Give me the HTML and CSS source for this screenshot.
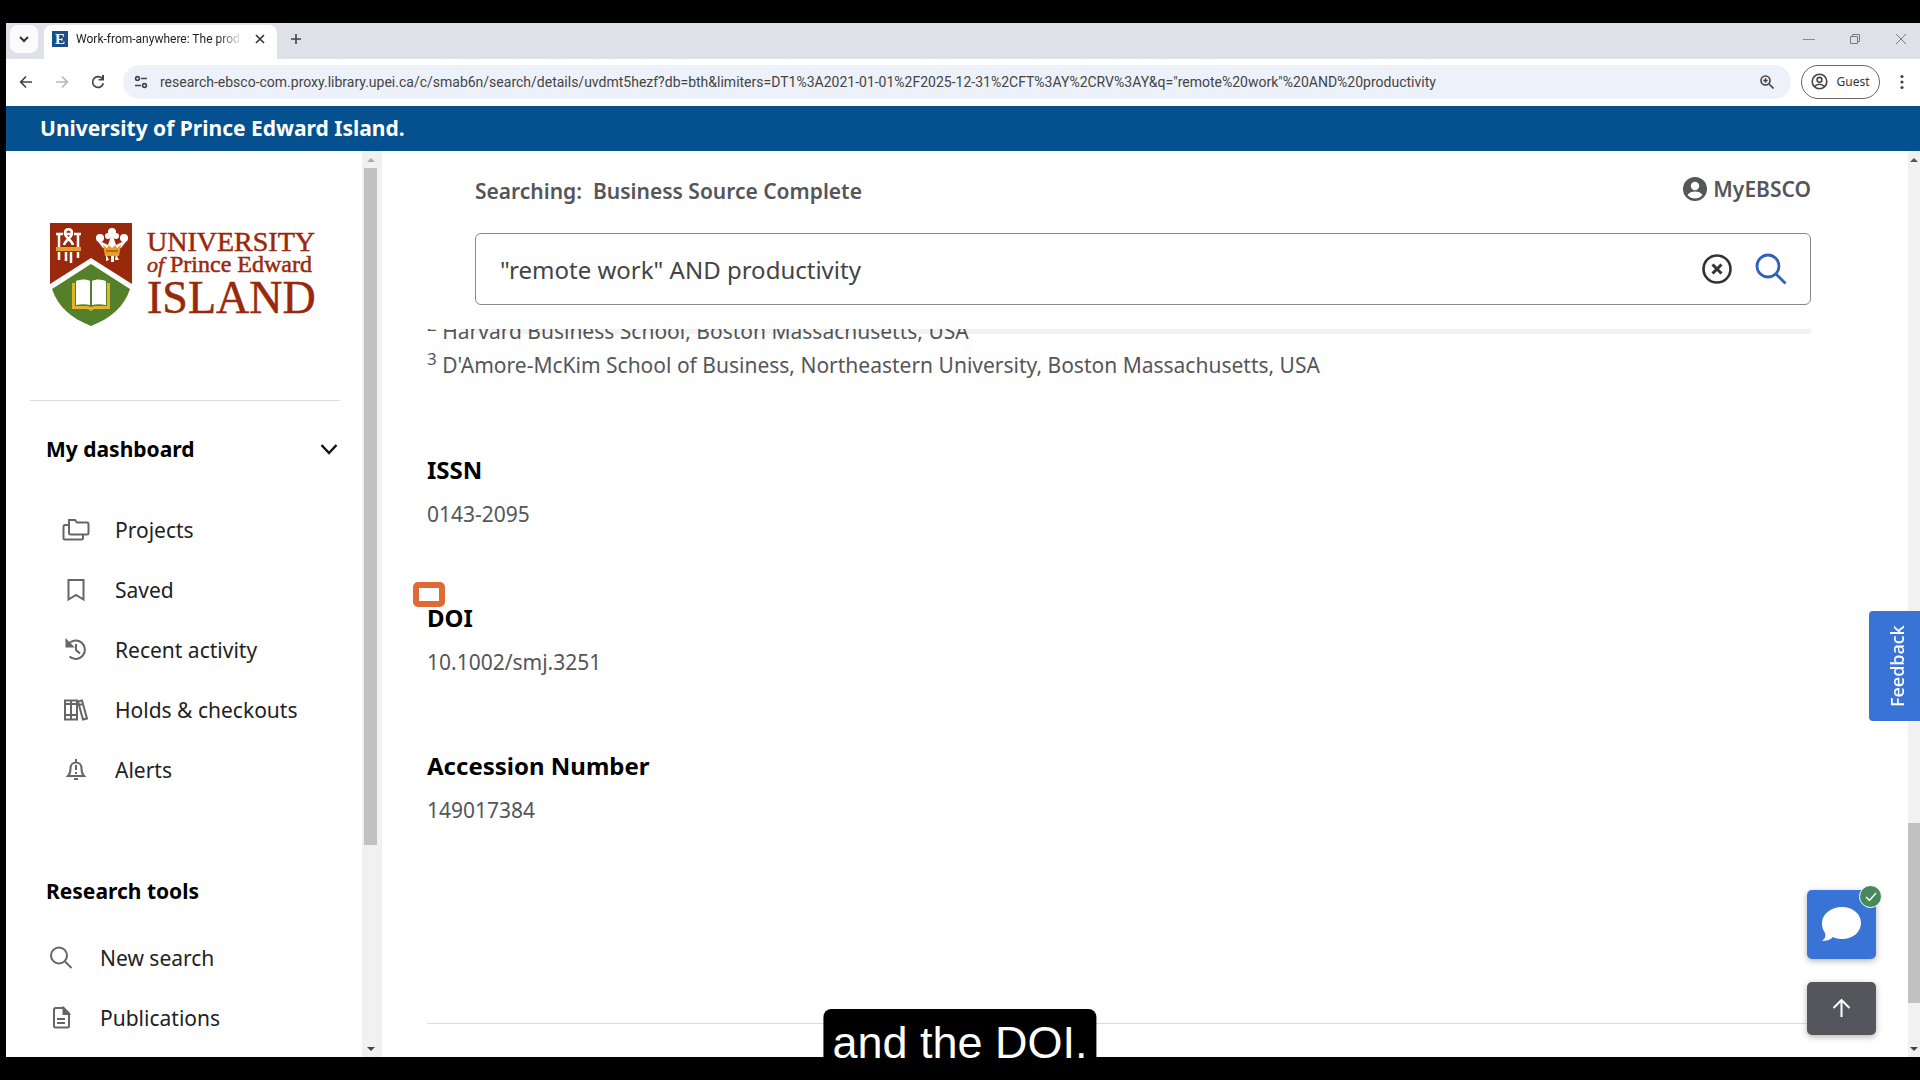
FILE: index.html
```html
<!DOCTYPE html>
<html lang="en">
<head>
  <meta charset="UTF-8">
  <meta name="viewport" content="width=device-width, initial-scale=1.0">
  <title>Work-from-anywhere: The productivity effects</title>
  <link rel="stylesheet" href="styles.css">
</head>
<body>

<div class="window">
  <div class="tab-strip">
    <button class="tab-search" aria-label="Search tabs"><svg width="12" height="12" viewBox="0 0 12 12"><path d="M2 4l4 4 4-4" fill="none" stroke="#333" stroke-width="2"/></svg></button>
    <div class="tab">
      <span class="favicon">E</span>
      <span class="tab-title">Work-from-anywhere: The prod</span>
      <button aria-label="Close tab"><svg width="10" height="10" viewBox="0 0 10 10"><path d="M1 1l8 8M9 1l-8 8" stroke="#333" stroke-width="1.6"/></svg></button>
    </div>
    <button class="new-tab" aria-label="New tab"><svg width="12" height="12" viewBox="0 0 12 12"><path d="M6 1v10M1 6h10" stroke="#444" stroke-width="1.6"/></svg></button>
    <div class="window-buttons">
      <button aria-label="Minimize"><svg width="12" height="12" viewBox="0 0 12 12"><path d="M0 6.5h12" stroke="#888b92"/></svg></button>
      <button aria-label="Restore"><svg width="12" height="12" viewBox="0 0 12 12"><path d="M1.5 3.500h7v7h-7zM3.500 3.500v-2h7v7h-2" fill="none" stroke="#777a82"/></svg></button>
      <button aria-label="Close"><svg width="12" height="12" viewBox="0 0 12 12"><path d="M1 1l10 10M11 1L1 11" stroke="#777a82"/></svg></button>
    </div>
  </div>

  <div class="toolbar">
    <button aria-label="Back"><svg width="14" height="14" viewBox="0 0 14 14"><path d="M13 7H2M7 1.500L1.700 7 7 12.500" fill="none" stroke="#444" stroke-width="1.700"/></svg></button>
    <button aria-label="Forward"><svg width="14" height="14" viewBox="0 0 14 14"><path d="M1 7h11M7 1.500L12.300 7 7 12.500" fill="none" stroke="#b5b5b5" stroke-width="1.700"/></svg></button>
    <button aria-label="Reload"><svg width="14" height="14" viewBox="0 0 14 14"><path d="M11.500 4A5.400 5.400 0 1 0 12.300 8.200" fill="none" stroke="#444" stroke-width="1.700"/><path d="M13 0v5.500H7.500V4H11V0z" fill="#444"/></svg></button>
    <div class="address">
      <span class="site-info"><svg width="14" height="14" viewBox="0 0 14 14"><g fill="none" stroke="#444" stroke-width="1.600"><circle cx="3.500" cy="3.500" r="1.900"/><path d="M7 3.500h6M1 10.500h6"/><circle cx="10.500" cy="10.500" r="1.900"/></g></svg></span>
      <input type="text" aria-label="Address" value="research-ebsco-com.proxy.library.upei.ca/c/smab6n/search/details/uvdmt5hezf?db=bth&amp;limiters=DT1%3A2021-01-01%2F2025-12-31%2CFT%3AY%2CRV%3AY&amp;q=&quot;remote%20work&quot;%20AND%20productivity">
      <button aria-label="Zoom"><svg width="14" height="14" viewBox="0 0 14 14"><g fill="none" stroke="#444" stroke-width="1.600"><circle cx="5.500" cy="5.500" r="4.500"/><path d="M9 9l4.500 4.500M5.500 3.300v4.400M3.300 5.500h4.400"/></g></svg></button>
    </div>
    <button class="guest"><svg width="17" height="17" viewBox="0 0 17 17"><g fill="none" stroke="#444" stroke-width="1.600"><circle cx="8.500" cy="8.500" r="7.300"/><circle cx="8.500" cy="6.800" r="2.400"/><path d="M3.500 13.500c2.600-3 7.400-3 10 0"/></g></svg>Guest</button>
    <button aria-label="Menu"><svg width="4" height="16" viewBox="0 0 4 16"><g fill="#444"><circle cx="2" cy="2.500" r="1.600"/><circle cx="2" cy="8" r="1.600"/><circle cx="2" cy="13.500" r="1.600"/></g></svg></button>
  </div>

  <div class="banner">University of Prince Edward Island.</div>

  <div class="page">
    <nav class="sidebar">
      <a class="logo" href="#" aria-label="University of Prince Edward Island">
        <svg width="268" height="106" viewBox="0 0 268 106">
          <path d="M0 0h82v62C76 84 61 96 41 104 21 96 6 84 0 62z" fill="#fff"/>
          <path d="M0 0h82v61L41 35 0 61z" fill="#99290c"/>
          <path d="M41 41l39 25C74 84 61 95 41 103 21 95 8 84 2 66z" fill="#55802a"/>
          <path d="M22 60h3v23h13l3 1 3-1h13V60h3v26H44l-3 2-3-2H22z" fill="#e3b32c"/>
          <path d="M26 58c5-2 11-2 14 0v24c-4-1-9-1-14 0zM42 58c4-2 9-2 14 0v24c-5-1-10-1-14 0z" fill="#fff"/>
          <g fill="none" stroke="#fff" stroke-width="2.500"><path d="M6 11h7M14 11h9M24 11h7M9 10v14M28 10v14M9 29v8M28 29v6M16 29v9M21 29v11M14 22c1-5 8-7 8-12 0-5-7-5-7 0 0 5 7 7 8 12"/></g>
          <path d="M6 24h25v4H6z" fill="#e5a02a"/>
          <g fill="#fff"><circle cx="62" cy="9" r="4"/><circle cx="58" cy="13" r="3"/><circle cx="66" cy="13" r="3"/><circle cx="50" cy="15" r="4"/><circle cx="74" cy="15" r="4"/><path d="M46 16l12 6 4-12 4 12 12-6-7 9H53zM56 31l3 6-3 1zM61 31h3v8h-3zM66 31l3 6h-4z"/></g>
          <path d="M53 22l4 3 2-3 3 3 3-3 2 3 4-3-2 11H55z" fill="#e5a02a"/><path d="M56 28h12" stroke="#99290c"/>
          <g class="logo-text"><text x="97" y="28" font-size="28">UNIVERSITY</text><text x="97" y="49" font-size="22" font-style="italic">of</text><text x="120" y="49" font-size="24">Prince Edward</text><text x="97" y="90" font-size="46">ISLAND</text></g>
        </svg>
      </a>
      <div class="nav-section">
        <h2>My dashboard <button aria-label="Collapse"><svg width="18" height="18" viewBox="0 0 18 18"><path d="M1.500 5L9 13l7.500-8" fill="none" stroke="#111" stroke-width="2.400"/></svg></button></h2>
        <ul class="nav-list nested">
          <li><a href="#"><svg width="28" height="24" viewBox="0 0 28 24"><path d="M7 2h6l2 2.500h10q1.500 0 1.500 1.500v9q0 1.500-1.500 1.500H9Q7 16.500 7 15zM7 7H3Q1.500 7 1.500 8.500V20q0 1.500 1.500 1.500h16.500q1.500 0 1.500-1.500v-3.500"/></svg>Projects</a></li>
          <li><a href="#"><svg width="28" height="24" viewBox="0 0 28 24"><path d="M6.500 2h15v19.500L14 17l-7.500 4.500z"/></svg>Saved</a></li>
          <li><a href="#"><svg width="28" height="24" viewBox="0 0 28 24"><path d="M6.500 6A9.200 9.200 0 1 1 7.500 18.500M14 6v6l4 3.500"/><path d="M4.500 2.500v6h6z" fill="#666"/></svg>Recent activity</a></li>
          <li><a href="#"><svg width="28" height="24" viewBox="0 0 28 24"><path d="M3 2.500h12v19H3zM9 2.500v19M3 6h12M3 17h12M16 3.500l4-1 5 18-4 1zM17 7l4-1"/></svg>Holds &amp; checkouts</a></li>
          <li><a href="#"><svg width="28" height="24" viewBox="0 0 28 24"><path d="M14 1v3M6 18c2-2 2.500-4 2.500-7.500 0-8 11-8 11 0 0 3.500.5 5.500 2.500 7.500zM12 21h4M14 7v5M14 14v2" /></svg>Alerts</a></li>
        </ul>
      </div>
      <div class="nav-section">
        <h2>Research tools</h2>
        <ul class="nav-list">
          <li><a href="#"><svg width="28" height="24" viewBox="0 0 28 24"><circle cx="12" cy="9.500" r="8"/><path d="M18 15.500l6.500 6.500"/></svg>New search</a></li>
          <li><a href="#"><svg width="28" height="24" viewBox="0 0 28 24"><path d="M8.500 2h8l5.500 5.500V20q0 1.500-1.500 1.500h-12Q7 21.500 7 20V3.500Q7 2 8.500 2zM10 13h8M10 17h8"/><path d="M16.500 2v6H22z" fill="#666"/></svg>Publications</a></li>
        </ul>
      </div>
    </nav>
    <div class="scrollbar side-scroll"><span class="arrow up"></span><span class="thumb"></span><span class="rest"></span><span class="arrow down"></span></div>

    <main class="content">
      <header class="search-header">
        <div class="search-top">
          <span>Searching: &nbsp;Business Source Complete</span>
          <a class="account" href="#"><svg width="24" height="24" viewBox="0 0 24 24"><circle cx="12" cy="12" r="12" fill="#55565a"/><circle cx="12" cy="9" r="4.200" fill="#fff"/><path d="M4.500 18c3-4.600 12-4.600 15 0-4 4.700-11 4.700-15 0z" fill="#fff"/></svg>MyEBSCO</a>
        </div>
        <form class="search-box">
          <input type="text" aria-label="Search" value="&quot;remote work&quot; AND productivity">
          <button type="button" aria-label="Clear"><svg width="30" height="30" viewBox="0 0 30 30"><g fill="none" stroke="#333"><circle cx="15" cy="15" r="13.500" stroke-width="2.600"/><path d="M10.500 10.500l9 9M19.500 10.500l-9 9" stroke-width="3"/></g></svg></button>
          <button type="button" aria-label="Search"><svg width="32" height="32" viewBox="0 0 32 32"><g fill="none" stroke="#3262b5" stroke-width="2.800"><circle cx="13" cy="13" r="11"/><path d="M21 21l9.500 9.500"/></g></svg></button>
        </form>
      </header>
      <article class="record">
        <ul class="affiliations">
          <li><sup>2</sup> Harvard Business School, Boston Massachusetts, USA</li>
          <li><sup>3</sup> D'Amore-McKim School of Business, Northeastern University, Boston Massachusetts, USA</li>
        </ul>
        <section><h3>ISSN</h3><p>0143-2095</p></section>
        <section class="marked"><h3>DOI</h3><p>10.1002/smj.3251</p></section>
        <section><h3>Accession Number</h3><p>149017384</p></section>
      </article>
    </main>
    <div class="scrollbar main-scroll"><span class="arrow up"></span><span class="space"></span><span class="thumb"></span><span class="rest"></span><span class="arrow down"></span></div>

    <button class="feedback">Feedback</button>
    <div class="floating">
      <button class="chat" aria-label="Chat">
        <svg width="42" height="38" viewBox="0 0 42 38"><path d="M21 1c11 0 19 7 19 16s-8 16-19 16c-4 0-7-1-9-2-3 3-7 4-11 4 3-2 4-5 3-8-2-3-3-6-3-10C1 8 10 1 21 1z" fill="#fff"/></svg>
        <span class="badge"><svg width="12" height="10" viewBox="0 0 12 10"><path d="M1 5l3.500 3.500L11 1" fill="none" stroke="#fff" stroke-width="1.500"/></svg></span>
      </button>
      <button class="to-top" aria-label="Back to top"><svg width="20" height="20" viewBox="0 0 20 20"><path d="M9.500 18V1M1.500 9l8-8 8 8" fill="none" stroke="#fff" stroke-width="2"/></svg></button>
    </div>
  </div>
</div>

<div class="caption">and the DOI.</div>

</body>
</html>
```
FILE: styles.css
```css
*, *::before, *::after { box-sizing: border-box; }
body { margin: 0; height: 100vh; padding: 23px 0 23px 6px; background: #000; font-family: "Noto Sans", sans-serif; overflow: hidden; }
button { border: none; background: none; padding: 0; font-family: inherit; cursor: pointer; display: flex; align-items: center; justify-content: center; }
input { border: none; background: none; outline: none; font-family: inherit; min-width: 0; flex: 1; padding: 0; }
a { color: inherit; text-decoration: none; }
h2, h3, p, ul { margin: 0; padding: 0; }
ul { list-style: none; }
svg { display: block; flex-shrink: 0; }

.window { height: 100%; display: flex; flex-direction: column; background: #fff; }

/* browser chrome */
.tab-strip { display: flex; align-items: center; height: 36px; background: #dfe1e8; padding: 2px 13px 6px 4px; flex-shrink: 0; }
.tab-search { width: 28px; height: 28px; background: #fbfbfd; border-radius: 8px; }
.tab { display: flex; align-items: center; align-self: stretch; width: 233px; margin: 0 0 -6px 6px; padding: 0 12px 6px 8px; background: #fff; border-radius: 8px 8px 0 0; }
.favicon { width: 16px; height: 16px; background: #17508c; color: #fff; font: bold 15px/16px "Liberation Serif", serif; text-align: center; }
.tab-title { flex: 1; margin: 0 12px 0 8px; font: 12px/18px Roboto, sans-serif; color: #222; white-space: nowrap; overflow: hidden; mask-image: linear-gradient(to right, #000 85%, transparent); }
.new-tab { margin-left: 9px; width: 20px; }
.window-buttons { display: flex; gap: 34px; margin-left: auto; }

.toolbar { display: flex; align-items: center; height: 47px; padding: 0 16px 2px 13px; gap: 22px; flex-shrink: 0; }
.address { flex: 1; display: flex; align-items: center; height: 34px; margin: 0 -12px 0 -4px; padding: 0 17px 0 4px; border-radius: 17px; background: #edf1fa; }
.site-info { width: 28px; margin-right: 5px; display: flex; justify-content: center; }
.address input { font: 14px Roboto, sans-serif; color: #444; }
.guest { width: 79px; height: 34px; margin-right: -2px; gap: 8px; border: 1px solid #666; border-radius: 17px; font-size: 12px; color: #333; }

.banner { height: 45px; flex-shrink: 0; padding-left: 34px; background: #05518f; color: #fff; font-size: 21px; font-weight: 700; line-height: 45px; }

.page { position: relative; flex: 1; min-height: 0; display: flex; }

/* sidebar */
.sidebar { width: 356px; flex-shrink: 0; padding: 0 22px 0 24px; overflow: hidden; }
.logo { display: block; padding: 72px 0 71px 20px; border-bottom: 1px solid #ddd; }
.logo-text { fill: #99290c; stroke: #99290c; stroke-width: 0.5; font-family: "Liberation Serif", serif; }
.nav-section { padding: 31px 0 58px; }
.nav-section + .nav-section { padding-top: 16px; }
.nav-section h2 { display: flex; justify-content: space-between; align-items: center; height: 34px; margin-bottom: 34px; padding: 0 2px 0 16px; font-size: 21px; }
.nav-section + .nav-section h2 { margin-bottom: 20px; }
.nav-list a { display: flex; align-items: center; gap: 25px; height: 60px; padding-left: 17px; font-size: 21px; color: #222; }
.nav-list.nested a { padding-left: 32px; }
.nav-list svg { fill: none; stroke: #666; stroke-width: 2; }

.scrollbar { display: flex; flex-direction: column; background: #f1f1f1; flex-shrink: 0; }
.arrow { height: 17px; display: flex; align-items: center; justify-content: center; }
.arrow::before { content: ""; border: 4px solid transparent; }
.up::before { border-top: none; border-bottom-color: #555; }
.down::before { border-bottom: none; border-top-color: #444; }
.thumb { background: #c1c1c1; }
.side-scroll { width: 20px; padding: 0 5px 0 2px; }
.side-scroll .up::before { border-bottom-color: #aaa; }
.side-scroll .thumb { flex: 677; }
.side-scroll .rest { flex: 195; }
.main-scroll { width: 12px; }
.main-scroll .space { flex: 655; }
.main-scroll .thumb { flex: 180; }
.main-scroll .rest { flex: 37; }

/* record */
.content { flex: 1; min-width: 0; padding: 0 97px 0 45px; overflow: hidden; color: #55565a; }
.search-header { position: relative; z-index: 1; height: 178px; background: #fff; padding: 24px 0 0 48px; }
.search-header::after { content: ""; position: absolute; top: 100%; left: 48px; right: 0; height: 5px; background: rgba(0, 0, 0, 0.05); }
.search-top { display: flex; justify-content: space-between; height: 58px; font-size: 21px; font-weight: 600; line-height: 32px; }
.account { display: flex; align-items: center; height: 28px; gap: 6px; }
.search-box { display: flex; align-items: center; gap: 23px; height: 72px; padding: 0 23px 0 24px; border: 1px solid #888; border-radius: 6px; }
.search-box input { font-size: 24px; color: #444; }
.record { margin-top: -15px; padding-bottom: 125px; border-bottom: 1px solid #ddd; font-size: 21px; line-height: 28px; }
.affiliations { margin-bottom: 72px; }
.affiliations li { height: 34px; line-height: 34px; }
.affiliations sup { font-size: 17px; line-height: 0; }
.record section { position: relative; margin-bottom: 74px; }
.record h3 { margin-bottom: 14px; font-size: 24px; line-height: 32px; color: #000; }
.marked::before { content: ""; position: absolute; left: -14px; top: -20px; width: 32px; height: 25px; border: 6px solid #e06a35; border-radius: 5px; }

/* floating controls */
.feedback { position: absolute; right: 0; top: 460px; width: 51px; height: 110px; padding-right: 4px; background: #3a73d6; color: #fff; font-size: 18px; font-weight: 500; border-radius: 0 4px 4px 0; writing-mode: vertical-rl; transform: rotate(180deg); }
.floating { position: absolute; right: 44px; bottom: 22px; display: flex; flex-direction: column; gap: 23px; }
.chat, .to-top { position: relative; width: 69px; border-radius: 5px; box-shadow: 0 2px 6px rgba(0, 0, 0, 0.3); }
.chat { height: 69px; background: #3a73d6; }
.to-top { height: 53px; background: #55565c; }
.badge { position: absolute; top: -5px; right: -6px; width: 23px; height: 23px; display: flex; align-items: center; justify-content: center; background: #47895a; border: 1px solid #fff; border-radius: 50%; }

.caption { position: absolute; left: 50%; bottom: 0; transform: translateX(-50%); height: 71px; padding: 0 9px; background: #000; color: #fff; border-radius: 8px 8px 0 0; font: 45px/68px "Liberation Sans", sans-serif; white-space: nowrap; }
```
